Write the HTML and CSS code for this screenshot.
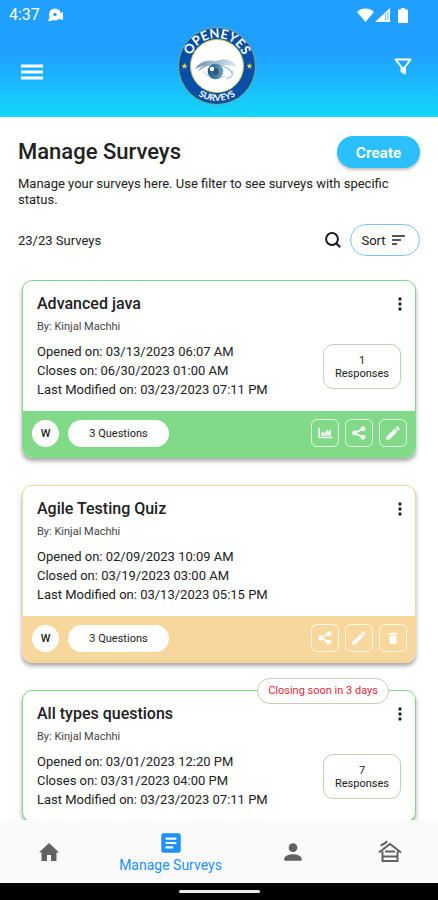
FILE: index.html
```html
<!DOCTYPE html>
<html lang="en">
<head>
<meta charset="utf-8">
<meta name="viewport" content="width=device-width, initial-scale=1">
<title>Manage Surveys</title>
<link rel="stylesheet" href="styles.css">
</head>
<body>
<svg class="sprite" aria-hidden="true">
  <symbol id="i-more" viewBox="0 0 24 24"><path d="M12 8a2 2 0 1 0 0-4 2 2 0 0 0 0 4zm0 2a2 2 0 1 0 0 4 2 2 0 0 0 0-4zm0 6a2 2 0 1 0 0 4 2 2 0 0 0 0-4z"/></symbol>
  <symbol id="i-share" viewBox="0 0 24 24"><path d="M5.500 12 18 5.500M5.500 12 18 18.500" stroke="currentColor" stroke-width="2.500"/><circle cx="5.500" cy="12" r="3.700"/><circle cx="18" cy="5.500" r="3.700"/><circle cx="18" cy="18.500" r="3.700"/></symbol>
  <symbol id="i-edit" viewBox="0 0 24 24"><path d="M3 17.250V21h3.750L17.810 9.940l-3.750-3.750L3 17.250zM20.710 7.040a1 1 0 0 0 0-1.410l-2.340-2.340a1 1 0 0 0-1.410 0l-1.830 1.830 3.750 3.750 1.830-1.830z"/></symbol>
  <symbol id="i-trash" viewBox="0 0 24 24"><path d="M6 20a2 2 0 0 0 2 2h8a2 2 0 0 0 2-2V8H6v12zM20 4h-4l-1-1.500H9L8 4H4v2.500h16V4z"/></symbol>
  <symbol id="i-chart" viewBox="0 0 24 24"><path d="M2 4h2.500v13.500H23V20H2V4z"/><path d="M6.500 16v-4l2-2 3 3 3.500-6 2.500 3L21 6v10H6.500z"/><path d="M10.500 16v-1.500M14.500 16v-4M18 16v-3" stroke="#80da88" stroke-width="1"/></symbol>
</svg>

<header class="header">
  <div class="status">
    <span class="status-left">
      <span class="clock">4:37</span>
      <svg width="16" height="14" viewBox="0 0 16 14" aria-hidden="true"><circle cx="7" cy="6.500" r="6"/><path d="M0 13l2-4 3 3-2 1zM11 11l4 1V4l-2 1z"/><circle cx="7" cy="6.500" r="1.700" fill="#1f9fff"/></svg>
    </span>
    <span class="status-right">
      <svg width="17" height="14" viewBox="0 0 17 14" aria-hidden="true"><path d="M0 4C4.500-.600 12.500-.600 17 4L8.500 14z"/></svg>
      <svg width="15" height="14" viewBox="0 0 15 14" aria-hidden="true"><path d="M15 0v14H0z"/><path d="M10.500 5.500v7M12.800 4v8" stroke="#7cc4fb" stroke-width="1.200"/></svg>
      <svg class="battery" width="10" height="15" viewBox="0 0 10 15" aria-hidden="true"><path d="M3 0h4v1.500h2a1 1 0 0 1 1 1V14a1 1 0 0 1-1 1H1a1 1 0 0 1-1-1V2.500a1 1 0 0 1 1-1h2z"/></svg>
    </span>
  </div>
  <div class="appbar">
    <button class="icon-btn menu" type="button" aria-label="Menu">
      <svg width="22" height="16" viewBox="0 0 22 16"><path d="M0 .500h22v3H0zM0 6.500h22v3H0zM0 12.500h22v3H0z"/></svg>
    </button>
    <svg class="logo" width="80" height="80" viewBox="0 0 80 80" role="img" aria-label="OpenEyes Surveys">
      <defs>
        <path id="arc-top" d="M12 40a28 28 0 0 1 56 0"/>
        <path id="arc-bottom" d="M5 40a35 35 0 0 0 70 0"/>
        <linearGradient id="iris" x1="0" y1="0" x2="1" y2="0"><stop offset="0" stop-color="#1e5580"/><stop offset="1" stop-color="#74a0c2"/></linearGradient>
        <linearGradient id="brow" x1="0" y1="0" x2="1" y2="0"><stop offset="0" stop-color="#6d93b0"/><stop offset="1" stop-color="#dbe6f2"/></linearGradient>
      </defs>
      <circle cx="40" cy="40" r="38.500" fill="#0a4fa5" stroke="#6fb28c" stroke-width="1"/>
      <circle cx="40" cy="40" r="26.500" fill="#fff" stroke="#b9cc5a" stroke-width="1"/>
      <path d="M18 43c4-7 12-10 21-8 8-3 16-2 21 6-6-2-10-2-15-2-9-2-16 0-22 2-2 1-4 1-5 2z" fill="url(#brow)"/>
      <path d="M22 44c6-5 12-6 19-5 8 1 12 4 15 9" fill="none" stroke="#88a9c4" stroke-width="1.200"/>
      <path d="M26 45c4 6 14 10 22 5" fill="none" stroke="#b4c9db" stroke-width="1"/>
      <circle cx="38.500" cy="45.500" r="7.800" fill="url(#iris)"/>
      <circle cx="38.500" cy="45.500" r="3.200" fill="#2a587e"/>
      <circle cx="35" cy="43" r="2.200" fill="#fff"/>
      <path d="M49 52c4 1 7-2 7-7" fill="none" stroke="#c6d7e6" stroke-width="2"/>
      <path id="star" d="M7.500 37l.900 2 2.100.200-1.600 1.400.500 2.100-1.900-1.100-1.900 1.100.500-2.100-1.600-1.400 2.100-.200z" fill="#d3d84f"/>
      <use href="#star" x="65"/>
      <text class="logo-top"><textPath href="#arc-top" startOffset="50%">OPENEYES</textPath></text>
      <text class="logo-bottom"><textPath href="#arc-bottom" startOffset="50%">SURVEYS</textPath></text>
    </svg>
    <button class="icon-btn filter" type="button" aria-label="Filter">
      <svg width="18" height="17" viewBox="0 0 18 17"><path d="M1.500 1.500h15L11 9v6.500L7.500 13.500V9z" fill="none" stroke="#fff" stroke-width="2" stroke-linejoin="round"/><path d="M7 9h4v7l-4-2.500z"/></svg>
    </button>
  </div>
</header>

<main class="content">
  <div class="title-row">
    <h1>Manage Surveys</h1>
    <button class="create" type="button">Create</button>
  </div>
  <p class="intro">Manage your surveys here. Use filter to see surveys with specific status.</p>
  <div class="tools">
    <span class="count">23/23 Surveys</span>
    <button class="search" type="button" aria-label="Search">
      <svg width="18" height="18" viewBox="0 0 18 18"><circle cx="8" cy="8" r="5.900" fill="none" stroke="#1b1b1b" stroke-width="2"/><path d="M12 12l4.200 4.200" stroke="#1b1b1b" stroke-width="2.200"/></svg>
    </button>
    <button class="sort" type="button">Sort
      <svg width="13" height="10" viewBox="0 0 13 10" aria-hidden="true"><path d="M0 1h13M0 5h9M0 9h5" stroke="#222" stroke-width="1.600"/></svg>
    </button>
  </div>

  <section class="list" aria-label="Surveys">
    <article class="card green">
      <div class="card-body">
        <div class="card-head">
          <h2>Advanced java</h2>
          <button class="more" type="button" aria-label="More"><svg width="20" height="20"><use href="#i-more"/></svg></button>
        </div>
        <p class="author">By: Kinjal Machhi</p>
        <div class="info">
          <div class="dates">
            <p>Opened on: 03/13/2023 06:07 AM</p>
            <p>Closes on: 06/30/2023 01:00 AM</p>
            <p>Last Modified on: 03/23/2023 07:11 PM</p>
          </div>
          <button class="responses" type="button"><span>1</span><span>Responses</span></button>
        </div>
      </div>
      <footer class="card-foot">
        <span class="badge">W</span>
        <span class="questions">3 Questions</span>
        <span class="actions">
          <button type="button" aria-label="Report"><svg width="16" height="16"><use href="#i-chart"/></svg></button>
          <button type="button" aria-label="Share"><svg width="16" height="16"><use href="#i-share"/></svg></button>
          <button type="button" aria-label="Edit"><svg width="18" height="18"><use href="#i-edit"/></svg></button>
        </span>
      </footer>
    </article>

    <article class="card orange">
      <div class="card-body">
        <div class="card-head">
          <h2>Agile Testing Quiz</h2>
          <button class="more" type="button" aria-label="More"><svg width="20" height="20"><use href="#i-more"/></svg></button>
        </div>
        <p class="author">By: Kinjal Machhi</p>
        <div class="info">
          <div class="dates">
            <p>Opened on: 02/09/2023 10:09 AM</p>
            <p>Closed on: 03/19/2023 03:00 AM</p>
            <p>Last Modified on: 03/13/2023 05:15 PM</p>
          </div>
        </div>
      </div>
      <footer class="card-foot">
        <span class="badge">W</span>
        <span class="questions">3 Questions</span>
        <span class="actions">
          <button type="button" aria-label="Share"><svg width="16" height="16"><use href="#i-share"/></svg></button>
          <button type="button" aria-label="Edit"><svg width="18" height="18"><use href="#i-edit"/></svg></button>
          <button type="button" aria-label="Delete"><svg width="14" height="14"><use href="#i-trash"/></svg></button>
        </span>
      </footer>
    </article>

    <article class="card green">
      <span class="closing">Closing soon in 3 days</span>
      <div class="card-body">
        <div class="card-head">
          <h2>All types questions</h2>
          <button class="more" type="button" aria-label="More"><svg width="20" height="20"><use href="#i-more"/></svg></button>
        </div>
        <p class="author">By: Kinjal Machhi</p>
        <div class="info">
          <div class="dates">
            <p>Opened on: 03/01/2023 12:20 PM</p>
            <p>Closes on: 03/31/2023 04:00 PM</p>
            <p>Last Modified on: 03/23/2023 07:11 PM</p>
          </div>
          <button class="responses" type="button"><span>7</span><span>Responses</span></button>
        </div>
      </div>
    </article>
  </section>
</main>

<nav class="tabs" aria-label="Main">
  <a href="#home" aria-label="Home"><svg width="24" height="24" viewBox="0 0 24 24"><path d="M10 21v-6h4v6h5.500v-8.500H22L12 3 2 12.500h2.500V21z"/></svg></a>
  <a class="current" href="#surveys" aria-current="page">
    <svg width="26" height="26" viewBox="0 0 24 24"><path d="M19 3H5a2 2 0 0 0-2 2v14a2 2 0 0 0 2 2h14a2 2 0 0 0 2-2V5a2 2 0 0 0-2-2zm-5 14H7v-2h7v2zm3-4H7v-2h10v2zm0-4H7V7h10v2z"/></svg>
    Manage Surveys
  </a>
  <a href="#profile" aria-label="Profile"><svg width="26" height="26" viewBox="0 0 24 24"><path d="M12 12a4 4 0 1 0 0-8 4 4 0 0 0 0 8zm0 2c-2.670 0-8 1.340-8 4v2h16v-2c0-2.660-5.330-4-8-4z"/></svg></a>
  <a href="#warehouse" aria-label="Workspace"><svg width="24" height="24" viewBox="0 0 24 24"><g fill="none" stroke="#616161" stroke-width="2"><path d="M1 12.500 12 4l11 8.500M4.500 11.500V21h15v-9.500M4.500 16.500h15M7 11.500h10"/><path d="M3 6c1-3 4-1 6-5" /></g></svg></a>
</nav>
<div class="gesture"><span></span></div>
</body>
</html>
```
FILE: styles.css
```css
* { box-sizing: border-box; }

body {
  margin: 0;
  height: 100vh;
  display: flex;
  flex-direction: column;
  overflow: hidden;
  background: #fff;
  color: #212121;
  font-family: Roboto, "Liberation Sans", sans-serif;
  font-size: 13px;
}

h1, h2, p { margin: 0; }
svg { display: block; fill: currentColor; }
.sprite { position: absolute; width: 0; height: 0; }

button {
  font: inherit;
  color: inherit;
  background: none;
  border: 0;
  padding: 0;
  display: flex;
  align-items: center;
  justify-content: center;
}

/* Header */
.header {
  flex: none;
  color: #fff;
  background: linear-gradient(#1f9fff 45%, #14d8fb);
  padding-bottom: 11px;
}
.status {
  height: 26px;
  padding: 4px 30px 0 9px;
  display: flex;
  align-items: center;
  justify-content: space-between;
}
.status-left, .status-right { display: flex; align-items: center; }
.status-left { gap: 8px; }
.status-right { gap: 1px; }
.battery { margin-left: 7px; }
.clock { font-size: 16px; line-height: 20px; }
.appbar {
  display: grid;
  grid-template-columns: 1fr auto 1fr;
  align-items: center;
  padding: 0 26px 0 21px;
}
.menu { justify-self: start; padding-top: 12px; }
.filter { justify-self: end; }
.logo { overflow: visible; }
.logo text { fill: #fff; text-anchor: middle; font-family: Lato, sans-serif; font-weight: 700; }
.logo .logo-top { font-size: 13px; }
.logo .logo-bottom { font-size: 9px; }

/* Page intro */
.content { flex: 1; min-height: 0; overflow: hidden; padding: 19px 18px 0; }
.title-row { display: flex; align-items: center; justify-content: space-between; }
h1 { font-size: 22px; line-height: 32px; font-weight: 500; }
.create {
  width: 83px;
  height: 32px;
  border-radius: 16px;
  background: #2bbffc;
  color: #fff;
  font-family: Inter, sans-serif;
  font-size: 14px;
  font-weight: 700;
  box-shadow: 0 2px 3px rgba(0, 0, 0, .25);
}
.intro { margin-top: 8px; line-height: 16px; }
.tools { margin-top: 16px; display: flex; align-items: center; }
.count { flex: 1; }
.search { margin-right: 8px; }
.sort {
  width: 70px;
  height: 32px;
  padding-right: 4px;
  gap: 6px;
  border: 1px solid #7cc6fb;
  border-radius: 16px;
}

/* Survey cards */
.list { display: grid; gap: 27px; padding: 24px 4px; }
.card {
  position: relative;
  border: 1px solid var(--tone);
  border-radius: 10px;
  background: #fff;
  box-shadow: 0 3px 4px rgba(0, 0, 0, .35);
}
.green { --tone: #80da88; }
.orange { --tone: #f8d79c; }
.card-body { height: 130px; padding: 12px 14px 0; }
.card-head { display: flex; align-items: center; justify-content: space-between; }
h2 { font-size: 16px; line-height: 22px; font-weight: 500; }
.more { margin-right: -9px; }
.author { margin-top: 4px; font-size: 11px; line-height: 16px; color: #444; }
.info { margin-top: 7px; display: flex; justify-content: space-between; }
.dates { line-height: 19px; }
.responses {
  width: 78px;
  height: 45px;
  margin-top: 2px;
  flex-direction: column;
  border: 1px solid #c9ccb0;
  border-radius: 10px;
  font-size: 11px;
  line-height: 13px;
}
.card-foot {
  height: 46px;
  padding: 0 8px 2px 9px;
  display: flex;
  align-items: center;
  gap: 9px;
  background: var(--tone);
  border-radius: 0 0 9px 9px;
  font-size: 11px;
}
.badge, .questions {
  height: 27px;
  border-radius: 14px;
  background: #fff;
  display: flex;
  align-items: center;
  justify-content: center;
}
.badge { width: 27px; font-weight: 500; }
.questions { width: 101px; }
.actions { margin-left: auto; display: flex; gap: 6px; }
.actions button {
  width: 28px;
  height: 28px;
  color: #fff;
  border: 1px solid rgba(255, 255, 255, .8);
  border-radius: 6px;
}
.closing {
  position: absolute;
  top: -13px;
  right: 26px;
  height: 26px;
  padding: 0 10px;
  border: 1px solid #c9ccb0;
  border-radius: 13px;
  background: #fff;
  color: #e0283c;
  font-size: 11px;
  line-height: 24px;
}

/* Bottom navigation */
.tabs {
  position: relative;
  flex: none;
  height: 63px;
  display: grid;
  grid-template-columns: 97fr 147fr 97fr 97fr;
  background: #fafafa;
  color: #616161;
}
.tabs a {
  display: flex;
  flex-direction: column;
  align-items: center;
  justify-content: center;
  color: inherit;
  text-decoration: none;
  font-size: 14px;
  line-height: 18px;
}
.tabs .current { color: #1e90ff; }
.gesture {
  flex: none;
  height: 17px;
  display: flex;
  align-items: center;
  justify-content: center;
  background: #000;
}
.gesture span { width: 81px; height: 3px; border-radius: 2px; background: #e8e8e8; }
```
